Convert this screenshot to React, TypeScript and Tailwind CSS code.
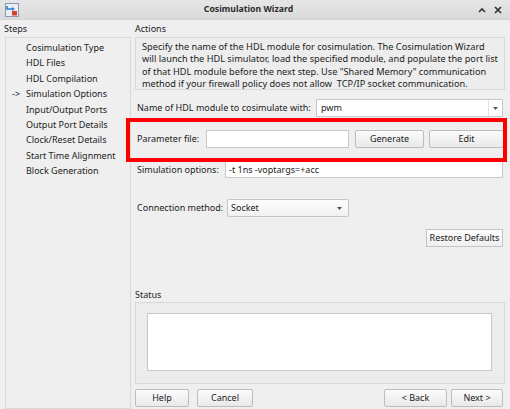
import React from "react";

const font = { fontFamily: '"Noto Sans", "DejaVu Sans", sans-serif' };

function Btn({ children, className = "" }: { children: React.ReactNode; className?: string }) {
  return (
    <div
      className={
        "flex items-center justify-center rounded-[2px] border border-[#bdbdbd] bg-gradient-to-b from-[#fbfbfb] to-[#e9e9e9] text-[9px] text-[#222] " +
        className
      }
    >
      {children}
    </div>
  );
}

function Arrow() {
  return (
    <svg width="5" height="3" viewBox="0 0 5 3" className="shrink-0">
      <path d="M0 0 L5 0 L2.5 3 Z" fill="#555" />
    </svg>
  );
}

export default function App() {
  const steps = [
    "Cosimulation Type",
    "HDL Files",
    "HDL Compilation",
    "Simulation Options",
    "Input/Output Ports",
    "Output Port Details",
    "Clock/Reset Details",
    "Start Time Alignment",
    "Block Generation",
  ];
  const desc = [
    "Specify the name of the HDL module for cosimulation. The Cosimulation Wizard",
    "will launch the HDL simulator, load the specified module, and populate the port list",
    'of that HDL module before the next step. Use "Shared Memory" communication',
    "method if your firewall policy does not allow\u00a0 TCP/IP socket communication.",
  ];
  return (
    <div className="relative flex h-[409px] w-[510px] flex-col overflow-hidden bg-[#efefef] text-[9px] text-[#222]" style={font}>
      {/* Title bar */}
      <div className="flex h-[20px] shrink-0 items-center border-b border-[#d2d2d2] bg-gradient-to-b from-[#e6e6e6] to-[#dadada] px-[5px]">
        <svg width="14" height="14" viewBox="0 0 14 14" className="shrink-0">
          <rect x="0.5" y="0.5" width="13" height="13" fill="#e9eef5" stroke="#8a9bb0" />
          <path d="M2 3 L2 6 L8 6" stroke="#2f7fd0" strokeWidth="1.6" fill="none" />
          <path d="M7 4 L10 6 L7 8 Z" fill="#2f7fd0" />
          <rect x="7" y="8" width="5" height="4.5" fill="#d0452c" />
        </svg>
        <div className="flex-1 text-center text-[8.7px] font-bold text-[#2c2c2c]">Cosimulation Wizard</div>
        <div className="flex items-center gap-[8px] pr-[3px]">
          <svg width="8" height="6" viewBox="0 0 8 6">
            <path d="M1 5 L4 2 L7 5" stroke="#333" strokeWidth="1.6" fill="none" />
          </svg>
          <svg width="8" height="8" viewBox="0 0 8 8">
            <path d="M1 1 L7 7 M7 1 L1 7" stroke="#333" strokeWidth="1.7" />
          </svg>
        </div>
      </div>

      <div className="flex flex-1">
        {/* Left */}
        <div className="flex w-[135px] shrink-0 flex-col pl-[4px]">
          <div className="flex h-[17px] items-center">Steps</div>
          <div className="ml-[1px] w-[126px] flex-1 border border-[#d9d9d9] bg-[#efefef] pt-[2px]">
            {steps.map((s) => (
              <div key={s} className="flex h-[15.4px] items-center">
                <span className="w-[20px] pl-[6px]">{s === "Simulation Options" ? "->" : ""}</span>
                <span>{s}</span>
              </div>
            ))}
          </div>
        </div>

        {/* Right */}
        <div className="flex w-[370px] flex-col">
          <div className="flex h-[17px] items-center">Actions</div>
          <div className="h-[53px] border border-[#d9d9d9] bg-[#ededed] px-[6px] pt-[3px] text-[9.2px] leading-[12.3px]">
            {desc.map((l) => (
              <div key={l} className="whitespace-nowrap">
                {l}
              </div>
            ))}
          </div>

          <div className="mt-[9px] flex h-[18px] items-center pl-[2px]">
            <span className="w-[179px]">Name of HDL module to cosimulate with:</span>
            <div className="flex h-full w-[187px] items-center border border-[#c8c8c8] bg-white pl-[4px]">
              <span className="flex-1">pwm</span>
              <div className="flex h-full w-[14px] items-center justify-center border-l border-[#e2e2e2]">
                <Arrow />
              </div>
            </div>
          </div>

          <div className="mt-[13px] flex h-[18px] items-center pl-[2px]">
            <span className="w-[69px]">Parameter file:</span>
            <div className="h-full w-[143px] border border-[#c8c8c8] bg-white"></div>
            <Btn className="ml-[6px] h-full w-[69px]">Generate</Btn>
            <Btn className="ml-[5px] h-full w-[75px]">Edit</Btn>
          </div>

          <div className="mt-[13px] flex h-[17px] items-center pl-[2px]">
            <span className="w-[88px]">Simulation options:</span>
            <div className="flex h-full w-[278px] items-center border border-[#c8c8c8] bg-white pl-[3px]">-t 1ns -voptargs=+acc</div>
          </div>

          <div className="mt-[21px] flex h-[18px] items-center pl-[2px]">
            <span className="w-[90px]">Connection method:</span>
            <div className="flex h-full w-[122px] items-center rounded-[2px] border border-[#c4c4c4] bg-gradient-to-b from-[#fdfdfd] to-[#f1f1f1] pl-[3px] pr-[6px]">
              <span className="flex-1">Socket</span>
              <Arrow />
            </div>
          </div>

          <div className="mt-[12px] flex justify-end pr-[2px]">
            <div className="flex h-[18px] w-[77px] items-center justify-center border border-[#c4c4c4] bg-gradient-to-b from-[#fdfdfd] to-[#efefef]">
              Restore Defaults
            </div>
          </div>

          <div className="mt-[40px] flex h-[15px] items-center">Status</div>
          <div className="h-[82px] w-[370px] border border-[#d9d9d9] bg-[#ececec] px-[11px] pt-[10px]">
            <div className="h-[58px] w-[345px] border border-[#c8c8c8] bg-white"></div>
          </div>

          <div className="mt-[5px] flex h-[18px] items-center pr-[2px]">
            <Btn className="h-full w-[54px]">Help</Btn>
            <Btn className="ml-[8px] h-full w-[56px]">Cancel</Btn>
            <div className="flex-1" />
            <Btn className="h-full w-[63px]">&lt; Back</Btn>
            <Btn className="ml-[4px] h-full w-[52px]">Next &gt;</Btn>
          </div>
        </div>
      </div>

      {/* Red highlight overlay */}
      <div className="pointer-events-none absolute left-[126px] top-[118px] h-[44px] w-[381px] border-[4px] border-[#ff0000]" />
    </div>
  );
}
